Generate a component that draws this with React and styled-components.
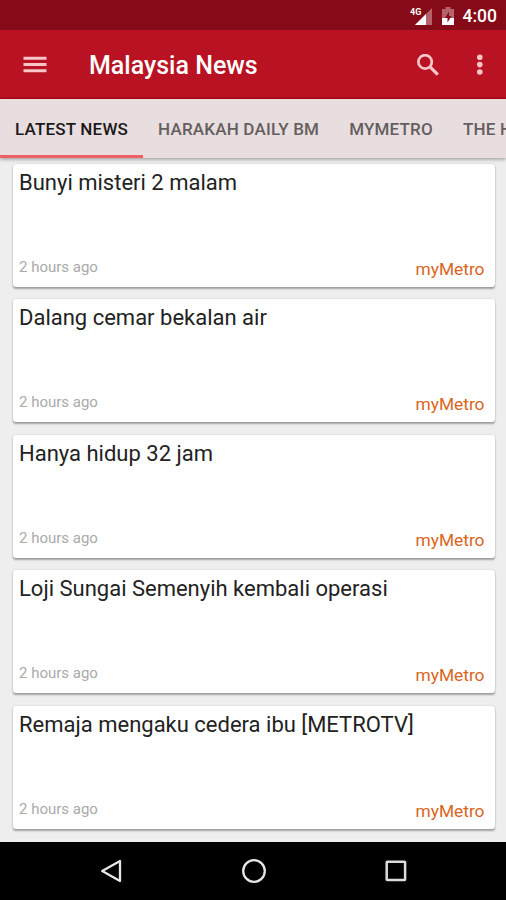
import React from 'react';
import styled, { createGlobalStyle } from 'styled-components';

const tabs = [
  { name: 'LATEST NEWS', active: true },
  { name: 'HARAKAH DAILY BM' },
  { name: 'MYMETRO' },
  { name: 'THE HERALD' },
];

const articles = [
  { id: 1, title: 'Bunyi misteri 2 malam' },
  { id: 2, title: 'Dalang cemar bekalan air' },
  { id: 3, title: 'Hanya hidup 32 jam' },
  { id: 4, title: 'Loji Sungai Semenyih kembali operasi' },
  { id: 5, title: 'Remaja mengaku cedera ibu [METROTV]' },
];

const ArticleCard = ({ title, time, source }) => {
  return (
    <Card>
      <CardTitle>{title}</CardTitle>
      <CardFooter>
        <CardTime>{time}</CardTime>
        <CardSource>{source}</CardSource>
      </CardFooter>
    </Card>
  );
};

const App = () => {
  return (
    <Screen>
      <GlobalStyle />
      <StatusBar>
        <SignalIcon width="23" height="20" viewBox="0 0 23 20">
          <path d="M22 2v17H5z" fill="#b5636b" />
          <path d="M16 8v11H5z" fill="#fff" />
          <text x="0" y="9">4G</text>
        </SignalIcon>
        <BatteryIcon width="12" height="18" viewBox="0 0 12 18">
          <path d="M3.5 0h5v2H12v16H0V2h3.5z" fill="#b5636b" />
          <path d="M0 11h12v7H0z" fill="#fff" />
          <path d="M7 4.5L3 11h2.5v4.5L9.5 9H7z" fill="#850b18" />
        </BatteryIcon>
        <Clock>4:00</Clock>
      </StatusBar>
      <AppBar>
        <IconButton aria-label="Menu">
          <svg width="24" height="18" viewBox="0 0 24 18" fill="#f8c5c8">
            <path d="M0.5 0.8h23v3h-23zM0.5 7h23v3h-23zM0.5 13.2h23v3h-23z" />
          </svg>
        </IconButton>
        <AppTitle>Malaysia News</AppTitle>
        <IconButton aria-label="Search">
          <svg width="23" height="23" viewBox="0 0 23 23" fill="none" stroke="#f8c5c8">
            <circle cx="8.1" cy="7.9" r="6.7" strokeWidth="2.7" />
            <path d="M13 12.8l7.8 7.8" strokeWidth="3.3" />
          </svg>
        </IconButton>
        <MoreButton aria-label="More">
          <svg width="6" height="22" viewBox="0 0 6 22" fill="#f8c5c8">
            <circle cx="2.8" cy="3.2" r="2.8" />
            <circle cx="2.8" cy="10.6" r="2.8" />
            <circle cx="2.8" cy="18" r="2.8" />
          </svg>
        </MoreButton>
      </AppBar>
      <TabBar>
        {tabs.map(({ name, active }) => (
          <Tab key={name} $active={active}>
            {name}
          </Tab>
        ))}
      </TabBar>
      <NewsList>
        {articles.map(({ id, title }) => (
          <ArticleCard key={id} title={title} time="2 hours ago" source="myMetro" />
        ))}
      </NewsList>
      <NavBar>
        <svg width="24" height="26" viewBox="0 0 24 26" fill="none" stroke="#e6e6e6">
          <path d="M21 3v20L3.2 13z" strokeWidth="2.3" strokeLinejoin="round" />
        </svg>
        <svg width="26" height="26" viewBox="0 0 26 26" fill="none" stroke="#e6e6e6">
          <circle cx="13" cy="13" r="10.8" strokeWidth="2.3" />
        </svg>
        <svg width="24" height="26" viewBox="0 0 24 26" fill="none" stroke="#dcdcdc">
          <rect x="2.7" y="3.7" width="18.4" height="18.4" rx="0.5" strokeWidth="2.5" />
        </svg>
      </NavBar>
    </Screen>
  );
};

export default App;

const GlobalStyle = createGlobalStyle`
  * {
    box-sizing: border-box;
  }

  body {
    margin: 0;
    font-family: Roboto, 'Liberation Sans', sans-serif;
  }
`;

const Screen = styled.div`
  display: flex;
  flex-direction: column;
  width: 506px;
  height: 900px;
  background: #eee;
  overflow: hidden;
`;

const StatusBar = styled.div`
  display: flex;
  align-items: center;
  justify-content: flex-end;
  flex: none;
  height: 30px;
  padding: 2px 9px 0 0;
  background: #850b18;
`;

const SignalIcon = styled.svg`
  margin-right: 9px;

  text {
    font-size: 9px;
    font-weight: 700;
    fill: #fff;
  }
`;

const BatteryIcon = styled.svg`
  margin-right: 9px;
`;

const Clock = styled.span`
  font-size: 17.5px;
  font-weight: 500;
  line-height: 20px;
  color: #fff;
`;

const AppBar = styled.header`
  display: flex;
  align-items: center;
  flex: none;
  height: 69px;
  padding: 2px 23px 0;
  background: #b91223;
  border-bottom: 1px solid #b2000c;
`;

const IconButton = styled.button`
  display: flex;
  padding: 0;
  background: none;
  border: none;
  cursor: pointer;
`;

const MoreButton = styled(IconButton)`
  margin-left: 37px;
`;

const AppTitle = styled.h1`
  flex: 1;
  margin: 2px 0 0 42px;
  font-size: 25px;
  font-weight: 500;
  line-height: 30px;
  color: #fff;
`;

const TabBar = styled.nav`
  position: relative;
  display: flex;
  flex: none;
  height: 59px;
  background: #e8dddf;
  box-shadow: 0 1px 4px rgba(0, 0, 0, 0.4);
`;

const Tab = styled.div`
  flex: none;
  padding: 20px 15px 0;
  font-size: 17px;
  font-weight: 500;
  line-height: 20px;
  letter-spacing: 0.19px;
  white-space: nowrap;
  color: ${({ $active }) => ($active ? '#1c191a' : '#655e60')};
  border-bottom: 3px solid ${({ $active }) => ($active ? '#ee5f68' : 'transparent')};
`;

const NewsList = styled.main`
  display: flex;
  flex-direction: column;
  flex: 1;
  gap: 12.5px;
  min-height: 0;
  padding: 5.7px 11.5px 0 12.5px;
`;

const Card = styled.article`
  display: flex;
  flex-direction: column;
  justify-content: space-between;
  flex: none;
  height: 123px;
  padding: 5.2px 10px 7px 6.5px;
  background: #fff;
  border-radius: 3px;
  box-shadow: 0 1.5px 2px rgba(0, 0, 0, 0.32), 0 0 1.5px rgba(0, 0, 0, 0.15);
`;

const CardTitle = styled.h2`
  margin: 0;
  font-size: 22px;
  font-weight: 400;
  line-height: 28px;
  white-space: nowrap;
  color: #222;
`;

const CardFooter = styled.div`
  display: flex;
  align-items: center;
  justify-content: space-between;
`;

const CardTime = styled.span`
  padding-bottom: 4px;
  font-size: 15px;
  line-height: 18px;
  color: #aaa;
`;

const CardSource = styled.span`
  font-size: 17.35px;
  line-height: 22px;
  color: #d9651d;
`;

const NavBar = styled.footer`
  display: flex;
  align-items: center;
  justify-content: space-between;
  flex: none;
  height: 58px;
  padding: 0 98px 0 99px;
  background: #000;
`;
